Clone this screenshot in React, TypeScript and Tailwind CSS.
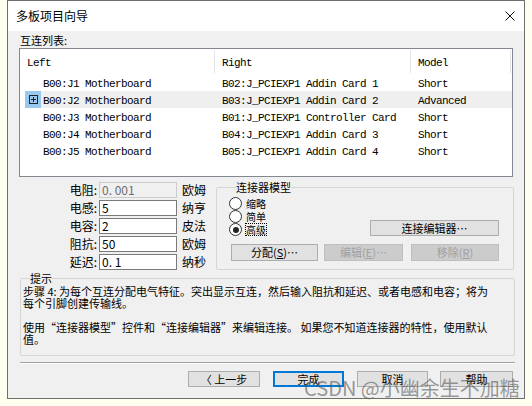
import React from 'react';

const rows = [
  { left: 'B00:J1 Motherboard', right: 'B02:J_PCIEXP1 Addin Card 1', model: 'Short' },
  { left: 'B00:J2 Motherboard', right: 'B03:J_PCIEXP1 Addin Card 2', model: 'Advanced', selected: true },
  { left: 'B00:J3 Motherboard', right: 'B01:J_PCIEXP1 Controller Card', model: 'Short' },
  { left: 'B00:J4 Motherboard', right: 'B04:J_PCIEXP1 Addin Card 3', model: 'Short' },
  { left: 'B00:J5 Motherboard', right: 'B05:J_PCIEXP1 Addin Card 4', model: 'Short' },
];

const params = [
  { label: '电阻:', value: '0. 001', unit: '欧姆', disabled: true },
  { label: '电感:', value: '5', unit: '纳亨' },
  { label: '电容:', value: '2', unit: '皮法' },
  { label: '阻抗:', value: '50', unit: '欧姆' },
  { label: '延迟:', value: '0. 1', unit: '纳秒' },
];

function Radio({ label, checked, focused }: { label: string; checked?: boolean; focused?: boolean }) {
  return (
    <div className="flex h-[13px] items-center">
      <div className="flex h-[13px] w-[13px] items-center justify-center rounded-full border border-[#333] bg-white">
        {checked && <div className="h-[6px] w-[6px] rounded-full bg-[#222]"></div>}
      </div>
      <span
        className={`ml-[3px] text-[10px] leading-[11px] ${focused ? 'border border-dotted border-black' : 'border border-transparent'}`}
      >
        {label}
      </span>
    </div>
  );
}

function Btn({ children, w, disabled, focused }: { children: React.ReactNode; w: string; disabled?: boolean; focused?: boolean }) {
  return (
    <div
      className={`flex items-center justify-center text-[11px] leading-none ${w} ${
        disabled
          ? 'border border-[#bfbfbf] bg-[#cccccc] text-[#a0a0a0]'
          : focused
          ? 'border-2 border-[#0078d7] bg-[#e1e1e1] text-black'
          : 'border border-[#adadad] bg-[#e1e1e1] text-black'
      }`}
    >
      {children}
    </div>
  );
}

export default function App() {
  return (
    <div className="relative h-[406px] w-[532px] overflow-hidden bg-[#fffff0] pl-[7px] font-['Noto_Sans_CJK_SC',sans-serif] text-black">
      {/* Dialog */}
      <div className="flex h-[399px] w-[518px] flex-col border border-[#6e6e6e] bg-[#f0f0f0]">
        {/* Title bar */}
        <div className="flex h-[30px] items-center justify-between bg-white pl-[8px] pr-[9px]">
          <span className="text-[12px]">多板项目向导</span>
          <svg width="10" height="10" viewBox="0 0 10 10">
            <path d="M0.5 0.5 L9.5 9.5 M9.5 0.5 L0.5 9.5" stroke="#111" strokeWidth="1" />
          </svg>
        </div>

        {/* Interconnect list */}
        <div className="mt-[3px] pl-[12px] text-[11px] leading-[12px]">互连列表:</div>
        <div className="ml-[11px] mt-[2px] h-[129px] w-[494px] border border-[#828790] bg-white font-['Liberation_Mono',monospace] text-[11px] tracking-[-0.6px]">
          <div className="flex h-[25px] items-center">
            <div className="flex h-[23px] w-[195px] items-center border-r border-[#e5e5e5] pl-[7px] pt-[4px]">Left</div>
            <div className="flex h-[23px] w-[196px] items-center border-r border-[#e5e5e5] pl-[7px] pt-[4px]">Right</div>
            <div className="flex h-[23px] w-[100px] items-center border-r border-[#e5e5e5] pl-[7px] pt-[4px]">Model</div>
          </div>
          {rows.map((r) => (
            <div key={r.left} className="flex h-[17px] pl-[5px]">
              <div className={`flex flex-1 items-center ${r.selected ? 'bg-[#efefef]' : ''}`}>
                <div className={`flex h-[17px] w-[16px] items-center justify-center ${r.selected ? 'bg-[#99c9ef]' : ''}`}>
                  {r.selected && (
                    <svg width="9" height="9" viewBox="0 0 9 9">
                      <rect x="0.5" y="0.5" width="8" height="8" fill="none" stroke="#222" />
                      <path d="M2 4.5 H7 M4.5 2 V7" stroke="#222" />
                    </svg>
                  )}
                </div>
                <span className="w-[174px] whitespace-nowrap pl-[2px] pt-[4px]">{r.left}</span>
                <span className="w-[196px] whitespace-nowrap pl-[7px] pt-[4px]">{r.right}</span>
                <span className="whitespace-nowrap pl-[7px] pt-[4px]">{r.model}</span>
              </div>
            </div>
          ))}
        </div>

        {/* Parameters + connector model */}
        <div className="ml-[11px] mt-[5px] flex">
          <div className="flex w-[197px] flex-col gap-[2px]">
            {params.map((p) => (
              <div key={p.label} className="flex h-[16px] items-center">
                <span className="w-[80px] pr-[2px] text-right text-[12px] leading-none">{p.label}</span>
                <div
                  className={`flex h-[16px] w-[78px] items-center pl-[2px] text-[12px] leading-none ${
                    p.disabled ? 'border border-[#cccccc] bg-[#f0f0f0] text-[#6d6d6d]' : 'border border-[#7a7a7a] bg-white'
                  }`}
                >
                  {p.value}
                </div>
                <span className="ml-[5px] text-[12px] leading-none">{p.unit}</span>
              </div>
            ))}
          </div>

          <fieldset className="-mt-[1px] h-[89px] w-[298px] rounded-[2px] border border-[#d5d5d5] pl-[12px] pr-[14px]">
            <legend className="ml-[7px] text-[11px] leading-[12px]">连接器模型</legend>
            <div className="mt-[4px] flex items-end">
              <div className="flex flex-col">
                <Radio label="缩略" />
                <Radio label="简单" />
                <Radio label="高级" checked focused />
              </div>
              <div className="ml-auto">
                <Btn w="w-[129px] h-[16px]">连接编辑器…</Btn>
              </div>
            </div>
            <div className="ml-[2px] mt-[8px] flex">
              <Btn w="w-[87px] h-[17px]">
                分配(<span className="underline">S</span>)…
              </Btn>
              <div className="ml-[6px]">
                <Btn w="w-[79px] h-[17px]" disabled>
                  编辑(<span className="underline">E</span>)…
                </Btn>
              </div>
              <div className="ml-[8px]">
                <Btn w="w-[88px] h-[17px]" disabled>
                  移除(<span className="underline">R</span>)
                </Btn>
              </div>
            </div>
          </fieldset>
        </div>

        {/* Hint */}
        <fieldset className="ml-[12px] mt-[2px] h-[84px] w-[495px] rounded-[2px] border border-[#d5d5d5] pl-[2px]">
          <legend className="ml-[7px] text-[11px] leading-[12px]">提示</legend>
          <div className="pt-[1px] text-[11px] leading-[12px]">
            <div className="whitespace-nowrap">步骤 4: 为每个互连分配电气特征。突出显示互连，然后输入阻抗和延迟、或者电感和电容；将为</div>
            <div className="whitespace-nowrap">每个引脚创建传输线。</div>
            <div className="h-[12px]"></div>
            <div className="whitespace-nowrap">使用“连接器模型”控件和“连接编辑器”来编辑连接。 如果您不知道连接器的特性，使用默认</div>
            <div className="whitespace-nowrap">值。</div>
          </div>
        </fieldset>

        {/* Separator */}
        <div className="ml-[12px] mt-[6px] w-[495px] border-b border-t border-b-white border-t-[#a0a0a0]"></div>

        {/* Wizard buttons */}
        <div className="ml-[180px] mt-[7px] flex">
          <Btn w="w-[72px] h-[16px]">〈 上一步</Btn>
          <div className="ml-[13px]">
            <Btn w="w-[71px] h-[16px]" focused>完成</Btn>
          </div>
          <div className="ml-[13px]">
            <Btn w="w-[71px] h-[16px]">取消</Btn>
          </div>
          <div className="ml-[12px]">
            <Btn w="w-[73px] h-[16px]">帮助</Btn>
          </div>
        </div>
      </div>

      {/* Watermark */}
      <div className="absolute left-[304px] top-[376px] whitespace-nowrap text-[20px] leading-[24px] text-[#5a5a5a]/60">
        CSDN @小幽余生不加糖
      </div>
    </div>
  );
}
